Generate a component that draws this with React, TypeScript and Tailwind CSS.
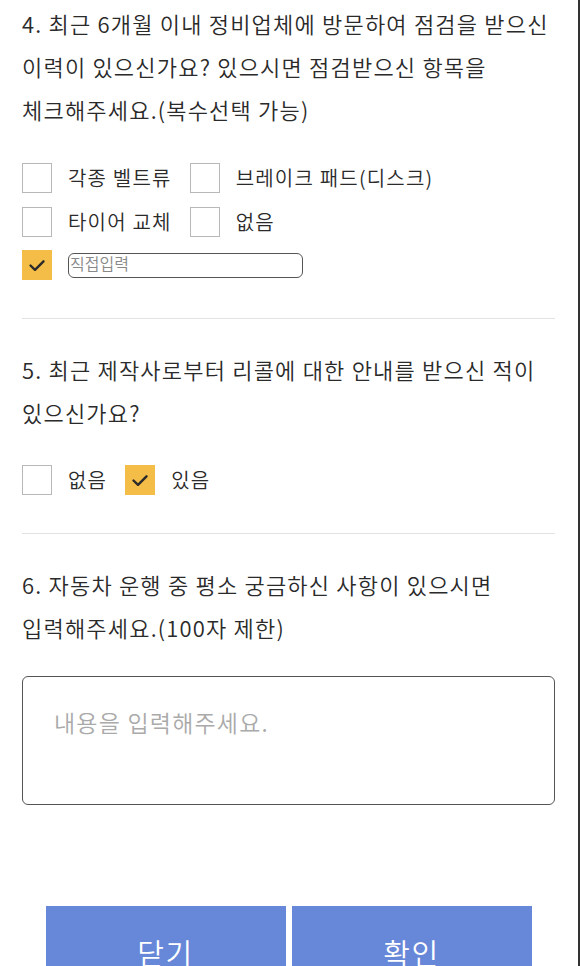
import React, { useState } from 'react';

function Check() {
  return (
    <svg width="18" height="13" viewBox="0 0 18 13" fill="none">
      <path d="M2.5 6.5 L7 10.8 L15.5 2.3" stroke="#2b2b2b" strokeWidth="2.4" strokeLinecap="round" strokeLinejoin="round" />
    </svg>
  );
}

function Box({ checked }: { checked: boolean }) {
  return checked ? (
    <span className="w-[30px] h-[30px] shrink-0 bg-[#f4bd47] flex items-center justify-center">
      <Check />
    </span>
  ) : (
    <span className="w-[30px] h-[30px] shrink-0 bg-white border-[1.5px] border-[#b8b8b8]" />
  );
}

function Option({ label, checked, onToggle }: { label: string; checked: boolean; onToggle: () => void }) {
  return (
    <button type="button" onClick={onToggle} className="flex items-center gap-[16px] h-[30px] text-left">
      <Box checked={checked} />
      <span className="text-[20px] leading-[30px] tracking-[1.2px] text-[#2a2a2a] whitespace-nowrap">{label}</span>
    </button>
  );
}

export default function App() {
  const [q4, setQ4] = useState<Record<string, boolean>>({ etc: true });
  const [q5, setQ5] = useState<'none' | 'yes'>('yes');
  const toggle = (k: string) => setQ4((s) => ({ ...s, [k]: !s[k] }));

  return (
    <div className="w-[580px] min-h-[966px] bg-white border-r-2 border-[#333] font-['Noto_Sans_CJK_KR',sans-serif] font-[350] text-[#2a2a2a] overflow-hidden">
      <div className="pl-[22px] pr-[23px]">
        {/* 4 */}
        <section className="pt-[2px] pb-[38px] border-b border-[#e2e2e2]">
          <p className="text-[22px] leading-[43px] tracking-[1.2px] break-keep">
            4. 최근 6개월 이내 정비업체에 방문하여 점검을 받으신 이력이 있으신가요? 있으시면 점검받으신 항목을 체크해주세요.(복수선택 가능)
          </p>
          <div className="mt-[32px] flex flex-col gap-[13.5px]">
            <div className="grid grid-cols-[auto_1fr] gap-x-[18px] gap-y-[13.5px]">
              <Option label="각종 벨트류" checked={!!q4.belt} onToggle={() => toggle('belt')} />
              <Option label="브레이크 패드(디스크)" checked={!!q4.brake} onToggle={() => toggle('brake')} />
              <Option label="타이어 교체" checked={!!q4.tire} onToggle={() => toggle('tire')} />
              <Option label="없음" checked={!!q4.none} onToggle={() => toggle('none')} />
            </div>
            <div className="flex items-center gap-[16px] h-[30px]">
              <button type="button" onClick={() => toggle('etc')}>
                <Box checked={!!q4.etc} />
              </button>
              <input
                placeholder="직접입력"
                className="w-[235px] h-[25px] box-border border-[1.5px] border-[#555] rounded-[6px] px-[1px] pb-[5px] text-[16px] leading-[18px] placeholder:text-[#888] outline-none"
              />
            </div>
          </div>
        </section>

        {/* 5 */}
        <section className="pt-[29px] pb-[38px] border-b border-[#e2e2e2]">
          <p className="text-[22px] leading-[43px] tracking-[1.2px] break-keep">
            5. 최근 제작사로부터 리콜에 대한 안내를 받으신 적이 있으신가요?
          </p>
          <div className="mt-[31px] flex items-center gap-[18px]">
            <Option label="없음" checked={q5 === 'none'} onToggle={() => setQ5('none')} />
            <Option label="있음" checked={q5 === 'yes'} onToggle={() => setQ5('yes')} />
          </div>
        </section>

        {/* 6 */}
        <section className="pt-[29px]">
          <p className="text-[22px] leading-[43px] tracking-[1.2px] break-keep">
            6. 자동차 운행 중 평소 궁금하신 사항이 있으시면
            <br />
            입력해주세요.(100자 제한)
          </p>
          <textarea
            maxLength={100}
            placeholder="내용을 입력해주세요."
            className="mt-[27px] block w-full h-[129px] box-border resize-none border-[1.5px] border-[#555] rounded-[6px] pt-[29px] px-[31px] text-[23px] leading-[32px] tracking-[1.2px] placeholder:text-[#aaa] outline-none"
          />
        </section>

        <div className="mt-[101px] flex justify-center gap-[6px]">
          <button className="w-[240px] h-[94px] bg-[#6787d8] text-white text-[29px] tracking-[1.5px]">닫기</button>
          <button className="w-[240px] h-[94px] bg-[#6787d8] text-white text-[29px] tracking-[1.5px]">확인</button>
        </div>
      </div>
    </div>
  );
}
